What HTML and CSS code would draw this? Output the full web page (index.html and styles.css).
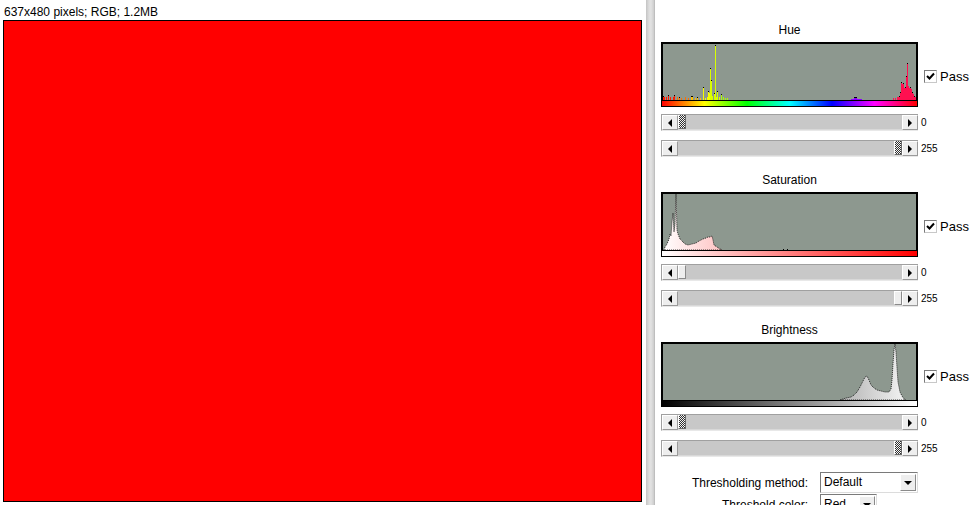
FILE: index.html
```html
<!DOCTYPE html>
<html>
<head>
<meta charset="utf-8">
<link rel="stylesheet" href="styles.css">
</head>
<body>
<div class="app">
  <div class="left">
    <div class="caption">637x480 pixels; RGB; 1.2MB</div>
    <div class="image"></div>
  </div>
  <div class="divider"></div>
  <div class="panel">

    <div class="section">
      <div class="title">Hue</div>
      <div class="hrow">
        <svg class="hist" width="257" height="65" viewBox="0 0 257 65">
          <defs>
            <linearGradient id="hueg" x1="0" x2="1" y1="0" y2="0">
              <stop offset="0" stop-color="#ff0000"/>
              <stop offset="0.1667" stop-color="#ffff00"/>
              <stop offset="0.3333" stop-color="#00ff00"/>
              <stop offset="0.5" stop-color="#00ffff"/>
              <stop offset="0.6667" stop-color="#0000ff"/>
              <stop offset="0.8333" stop-color="#ff00ff"/>
              <stop offset="1" stop-color="#ff0000"/>
            </linearGradient>
          </defs>
          <rect width="257" height="65" fill="#000"/>
          <rect x="2" y="2" width="253" height="56" fill="#8d988f"/>
          <g fill="#ff1a00">
            <rect x="2" y="54" width="1" height="4"/><rect x="3" y="55" width="1" height="3"/>
            <rect x="5" y="55" width="1" height="3"/><rect x="7" y="53" width="1" height="5"/>
            <rect x="9" y="55" width="1" height="3"/><rect x="12" y="55" width="1" height="3"/>
            <rect x="13" y="53" width="1" height="5"/>
          </g>
          <g fill="#ff7000">
            <rect x="16" y="55" width="1" height="3"/><rect x="18" y="55" width="1" height="3"/>
            <rect x="20" y="56" width="1" height="2"/><rect x="24" y="55" width="1" height="3"/>
            <rect x="27" y="56" width="1" height="2"/>
          </g>
          <g fill="#ffc000">
            <rect x="30" y="54" width="1" height="4"/><rect x="31" y="54" width="1" height="4"/>
            <rect x="34" y="56" width="1" height="2"/><rect x="36" y="55" width="1" height="3"/>
            <rect x="39" y="56" width="1" height="2"/>
          </g>
          <g fill="#f4ff00">
            <rect x="42" y="45" width="1" height="13"/><rect x="44" y="56" width="1" height="2"/>
            <rect x="46" y="55" width="1" height="3"/><rect x="47" y="49" width="1" height="9"/>
            <rect x="48" y="51" width="1" height="7"/>
          </g>
          <g fill="#d8ff00">
            <rect x="49" y="26" width="1" height="32"/><rect x="50" y="38" width="1" height="20"/>
            <rect x="51" y="54" width="1" height="4"/><rect x="53" y="51" width="1" height="7"/>
            <rect x="54" y="3" width="1" height="55"/><rect x="55" y="55" width="1" height="3"/>
            <rect x="56" y="49" width="1" height="9"/><rect x="58" y="55" width="1" height="3"/>
          </g>
          <g fill="#a8ff00">
            <rect x="60" y="52" width="1" height="6"/><rect x="62" y="55" width="1" height="3"/>
            <rect x="64" y="56" width="1" height="2"/><rect x="66" y="56" width="1" height="2"/>
          </g>
          <g fill="#8a00ff">
            <rect x="190" y="57" width="11" height="1"/><rect x="193" y="55" width="3" height="3"/>
          </g>
          <g fill="#ff1050">
            <rect x="232" y="56" width="1" height="2"/><rect x="234" y="56" width="1" height="2"/>
            <rect x="236" y="55" width="2" height="3"/><rect x="238" y="54" width="1" height="4"/>
            <rect x="239" y="50" width="1" height="8"/><rect x="240" y="40" width="1" height="18"/>
            <rect x="241" y="42" width="1" height="16"/><rect x="242" y="41" width="1" height="17"/>
            <rect x="243" y="46" width="1" height="12"/><rect x="244" y="45" width="1" height="13"/>
            <rect x="245" y="34" width="1" height="24"/><rect x="246" y="21" width="1" height="37"/>
            <rect x="247" y="44" width="1" height="14"/><rect x="248" y="46" width="1" height="12"/>
            <rect x="249" y="45" width="1" height="13"/><rect x="250" y="47" width="1" height="11"/>
            <rect x="251" y="50" width="1" height="8"/><rect x="252" y="52" width="1" height="6"/>
            <rect x="253" y="54" width="1" height="4"/><rect x="254" y="55" width="1" height="3"/>
          </g>
          <g fill="#000">
            <rect x="2" y="54" width="1" height="1"/><rect x="7" y="53" width="1" height="1"/>
            <rect x="13" y="53" width="1" height="1"/><rect x="18" y="55" width="1" height="1"/>
            <rect x="30" y="54" width="2" height="1"/><rect x="36" y="55" width="1" height="1"/>
            <rect x="42" y="45" width="1" height="1"/><rect x="47" y="49" width="1" height="1"/>
            <rect x="49" y="26" width="1" height="1"/><rect x="50" y="38" width="1" height="1"/>
            <rect x="53" y="51" width="1" height="1"/><rect x="54" y="3" width="1" height="1"/>
            <rect x="56" y="49" width="1" height="1"/><rect x="60" y="52" width="1" height="1"/>
            <rect x="193" y="55" width="3" height="1"/>
            <rect x="238" y="54" width="1" height="1"/><rect x="239" y="50" width="1" height="1"/>
            <rect x="240" y="40" width="1" height="1"/><rect x="242" y="41" width="1" height="1"/>
            <rect x="244" y="45" width="1" height="1"/><rect x="245" y="34" width="1" height="1"/>
            <rect x="246" y="21" width="1" height="1"/><rect x="249" y="45" width="1" height="1"/>
            <rect x="251" y="50" width="1" height="1"/><rect x="253" y="54" width="1" height="1"/>
          </g>
          <rect x="1" y="59" width="255" height="5" fill="url(#hueg)"/>
        </svg>
        <div class="pass"><span class="cb"><svg width="11" height="11" viewBox="0 0 11 11"><path d="M2 5 L4.5 7.5 L9 2.5" fill="none" stroke="#000" stroke-width="2"/></svg></span><span class="ptext">Pass</span></div>
      </div>
      <div class="srow first">
        <div class="slider"><span class="sbtn"><span class="al"></span></span><span class="track"><span class="thumb chk"></span></span><span class="sbtn"><span class="ar"></span></span></div>
        <span class="val">0</span>
      </div>
      <div class="srow second">
        <div class="slider"><span class="sbtn"><span class="al"></span></span><span class="track end"><span class="thumb chk"></span></span><span class="sbtn"><span class="ar"></span></span></div>
        <span class="val">255</span>
      </div>
    </div>

    <div class="section">
      <div class="title">Saturation</div>
      <div class="hrow">
        <svg class="hist" width="257" height="65" viewBox="0 0 257 65">
          <defs>
            <linearGradient id="satg" gradientUnits="userSpaceOnUse" x1="1" x2="256" y1="0" y2="0">
              <stop offset="0" stop-color="#ffffff"/>
              <stop offset="1" stop-color="#ff0000"/>
            </linearGradient>
          </defs>
          <rect width="257" height="65" fill="#000"/>
          <rect x="2" y="2" width="253" height="56" fill="#8d988f"/>
          <path d="M3 58 L4 55 L6 52 L8 47 L9 42 L10 44 L11 30 L12 21 L13 40 L14 32 L15 2 L16 38 L17 42 L19 47 L21 49 L24 52 L27 53 L31 52 L35 51 L38 49 L42 47 L45 46 L47 45 L49 45 L51 44 L52 48 L53 53 L56 55 L59 57 L61 58 Z" fill="url(#satg)" stroke="#000" stroke-width="0.8" stroke-dasharray="1 1"/>
          <rect x="122" y="57" width="1" height="1" fill="#000"/><rect x="126" y="57" width="1" height="1" fill="#000"/>
          <rect x="1" y="59" width="255" height="5" fill="url(#satg)"/>
        </svg>
        <div class="pass"><span class="cb"><svg width="11" height="11" viewBox="0 0 11 11"><path d="M2 5 L4.5 7.5 L9 2.5" fill="none" stroke="#000" stroke-width="2"/></svg></span><span class="ptext">Pass</span></div>
      </div>
      <div class="srow first">
        <div class="slider"><span class="sbtn"><span class="al"></span></span><span class="track"><span class="thumb plain"></span></span><span class="sbtn"><span class="ar"></span></span></div>
        <span class="val">0</span>
      </div>
      <div class="srow second">
        <div class="slider"><span class="sbtn"><span class="al"></span></span><span class="track end"><span class="thumb plain"></span></span><span class="sbtn"><span class="ar"></span></span></div>
        <span class="val">255</span>
      </div>
    </div>

    <div class="section">
      <div class="title">Brightness</div>
      <div class="hrow">
        <svg class="hist" width="257" height="65" viewBox="0 0 257 65">
          <defs>
            <linearGradient id="brig" gradientUnits="userSpaceOnUse" x1="1" x2="256" y1="0" y2="0">
              <stop offset="0" stop-color="#000000"/>
              <stop offset="1" stop-color="#ffffff"/>
            </linearGradient>
          </defs>
          <rect width="257" height="65" fill="#000"/>
          <rect x="2" y="2" width="253" height="56" fill="#8d988f"/>
          <path d="M179 58 L185 56 L190 55 L193 53 L196 50 L199 45 L202 39 L204 35 L206 34 L208 38 L210 43 L213 46 L216 48 L220 49 L224 50 L228 50 L230 47 L231 38 L232 22 L233 8 L234 2 L235 10 L236 26 L237 40 L239 50 L241 54 L243 57 L245 58 Z" fill="url(#brig)" stroke="#000" stroke-width="0.8" stroke-dasharray="1 1"/>
          <rect x="1" y="59" width="255" height="5" fill="url(#brig)"/>
        </svg>
        <div class="pass"><span class="cb"><svg width="11" height="11" viewBox="0 0 11 11"><path d="M2 5 L4.5 7.5 L9 2.5" fill="none" stroke="#000" stroke-width="2"/></svg></span><span class="ptext">Pass</span></div>
      </div>
      <div class="srow first">
        <div class="slider"><span class="sbtn"><span class="al"></span></span><span class="track"><span class="thumb chk"></span></span><span class="sbtn"><span class="ar"></span></span></div>
        <span class="val">0</span>
      </div>
      <div class="srow second">
        <div class="slider"><span class="sbtn"><span class="al"></span></span><span class="track end"><span class="thumb chk"></span></span><span class="sbtn"><span class="ar"></span></span></div>
        <span class="val">255</span>
      </div>
    </div>

    <div class="opts">
      <div class="orow">
        <span class="olabel">Thresholding method:</span>
        <span class="select wide"><span class="stext">Default</span><span class="sarrow"><span class="ad"></span></span></span>
      </div>
      <div class="orow">
        <span class="olabel">Threshold color:</span>
        <span class="select narrow"><span class="stext">Red</span><span class="sarrow"><span class="ad"></span></span></span>
      </div>
    </div>

  </div>
</div>
</body>
</html>
```

FILE: styles.css
```css
html, body {
  margin: 0;
  padding: 0;
  background: #ffffff;
}
body {
  width: 973px;
  height: 505px;
  overflow: hidden;
  font-family: "Liberation Sans", Arial, sans-serif;
  color: #000;
}
.app {
  display: flex;
  height: 505px;
}
.left {
  width: 646px;
  flex: none;
}
.caption {
  font-size: 12px;
  line-height: 14px;
  height: 15px;
  padding: 5px 0 0 4px;
  white-space: nowrap;
}
.image {
  margin-left: 3px;
  width: 637px;
  height: 480px;
  background: #ff0000;
  border: 1px solid #000;
}
.divider {
  width: 9px;
  flex: none;
  background: linear-gradient(to right, #c4c4c4, #dedede 35%, #e2e2e2 55%, #cfcfcf 85%, #b4b4b4);
}
.panel {
  flex: 1;
  padding: 21px 0 0 6px;
  display: flex;
  flex-direction: column;
}
.section {
  height: 150px;
  flex: none;
}
.title {
  width: 257px;
  text-align: center;
  font-size: 12px;
  line-height: 16px;
  height: 16px;
  padding-top: 1px;
}
.hrow {
  display: flex;
  align-items: center;
  margin-top: 4px;
}
.hist {
  display: block;
  flex: none;
}
.pass {
  display: flex;
  align-items: center;
  margin-left: 6px;
  padding-top: 3px;
}
.cb {
  width: 11px;
  height: 11px;
  background: #fff;
  border-top: 1px solid #7a7a7a;
  border-left: 1px solid #7a7a7a;
  border-right: 1px solid #c8c8c8;
  border-bottom: 1px solid #c8c8c8;
  display: flex;
}
.cb svg {
  display: block;
}
.ptext {
  font-size: 13px;
  margin-left: 3px;
  line-height: 15px;
}
.srow {
  display: flex;
  align-items: center;
}
.srow.first {
  margin-top: 7px;
}
.srow.second {
  margin-top: 9px;
}
.slider {
  width: 257px;
  height: 17px;
  box-sizing: border-box;
  display: flex;
  border-top: 1px solid #a0a0a0;
  border-left: 1px solid #a0a0a0;
  border-bottom: 1px solid #e8e8e8;
  background: #c8c8c8;
}
.sbtn {
  width: 16px;
  flex: none;
  box-sizing: border-box;
  background: #eeeeee;
  border-top: 1px solid #ffffff;
  border-left: 1px solid #ffffff;
  border-right: 1px solid #9a9a9a;
  border-bottom: 1px solid #9a9a9a;
  display: flex;
  align-items: center;
  justify-content: center;
}
.al {
  width: 0;
  height: 0;
  border-top: 4px solid transparent;
  border-bottom: 4px solid transparent;
  border-right: 4px solid #000;
}
.ar {
  width: 0;
  height: 0;
  border-top: 4px solid transparent;
  border-bottom: 4px solid transparent;
  border-left: 4px solid #000;
}
.track {
  flex: 1;
  display: flex;
  background: #c8c8c8;
  border-bottom: 1px solid #d8d8d8;
}
.track.end {
  justify-content: flex-end;
}
.thumb {
  width: 8px;
  flex: none;
  box-sizing: border-box;
}
.thumb.chk {
  background: repeating-conic-gradient(#303030 0 25%, #f4f4f4 0 50%) 0 0 / 2px 2px;
  border-left: 1px solid #ffffff;
  border-right: 1px solid #6a6a6a;
  border-bottom: 1px solid #6a6a6a;
}
.thumb.plain {
  background: #eeeeee;
  border-left: 1px solid #ffffff;
  border-top: 1px solid #ffffff;
  border-right: 1px solid #8a8a8a;
  border-bottom: 1px solid #8a8a8a;
}
.val {
  font-size: 10px;
  margin-left: 3px;
  line-height: 12px;
}
.opts {
  margin-top: 1px;
  display: flex;
  flex-direction: column;
  gap: 1px;
  margin-left: -6px;
}
.orow {
  display: flex;
  align-items: center;
  height: 21px;
}
.olabel {
  width: 153px;
  text-align: right;
  font-size: 12px;
  margin-right: 12px;
  white-space: nowrap;
}
.select {
  height: 21px;
  box-sizing: border-box;
  background: #fff;
  border-top: 1px solid #7a7a7a;
  border-left: 1px solid #7a7a7a;
  border-bottom: 1px solid #dcdcdc;
  border-right: 1px solid #dcdcdc;
  display: flex;
  align-items: stretch;
}
.select.wide {
  width: 98px;
}
.select.narrow {
  width: 57px;
}
.stext {
  flex: 1;
  font-size: 12px;
  line-height: 19px;
  padding-left: 3px;
}
.sarrow {
  width: 16px;
  margin: 1px;
  box-sizing: border-box;
  background: #eeeeee;
  border-top: 1px solid #ffffff;
  border-left: 1px solid #ffffff;
  border-right: 1px solid #8a8a8a;
  border-bottom: 1px solid #8a8a8a;
  display: flex;
  align-items: center;
  justify-content: center;
}
.ad {
  width: 0;
  height: 0;
  border-left: 4px solid transparent;
  border-right: 4px solid transparent;
  border-top: 4px solid #000;
}
```
